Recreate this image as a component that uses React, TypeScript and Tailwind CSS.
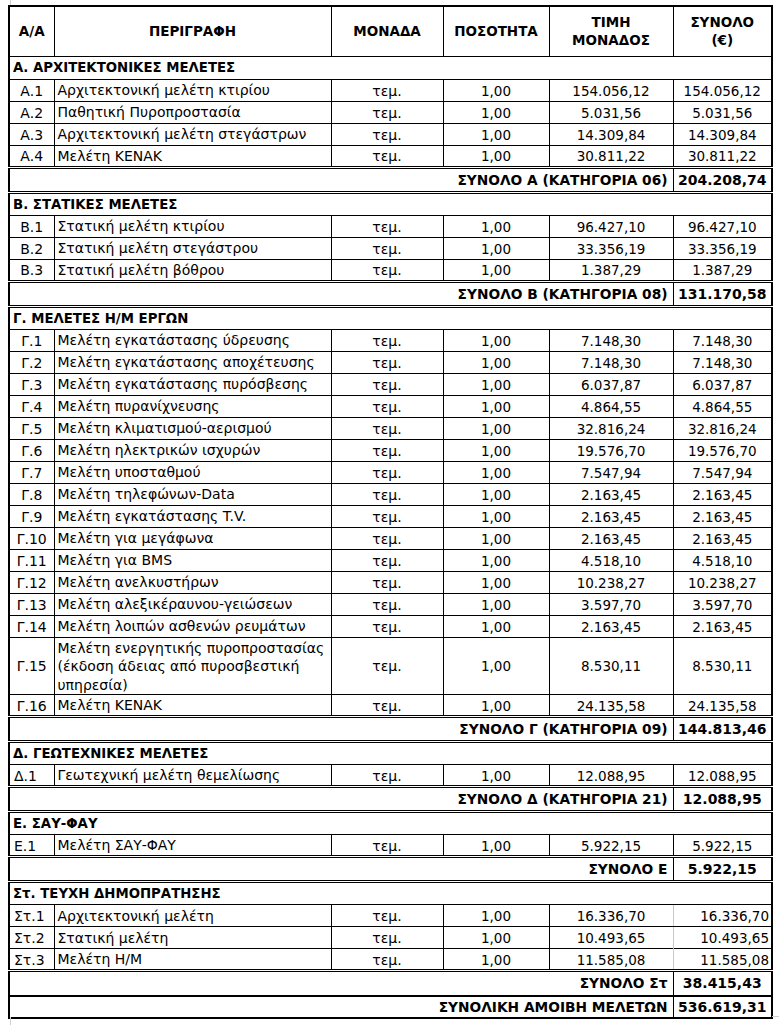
import React from "react";

type Item = [string, string[], string];
type Section = {
  title: string;
  items: Item[];
  total: [string, string];
  leftCode?: boolean;
  rightVals?: boolean;
  last?: boolean;
};

const sections: Section[] = [
  {
    title: "Α. ΑΡΧΙΤΕΚΤΟΝΙΚΕΣ ΜΕΛΕΤΕΣ",
    items: [
      ["Α.1", ["Αρχιτεκτονική μελέτη κτιρίου"], "154.056,12"],
      ["Α.2", ["Παθητική Πυροπροστασία"], "5.031,56"],
      ["Α.3", ["Αρχιτεκτονική μελέτη στεγάστρων"], "14.309,84"],
      ["Α.4", ["Μελέτη ΚΕΝΑΚ"], "30.811,22"],
    ],
    total: ["ΣΥΝΟΛΟ Α (ΚΑΤΗΓΟΡΙΑ 06)", "204.208,74"],
  },
  {
    title: "Β. ΣΤΑΤΙΚΕΣ ΜΕΛΕΤΕΣ",
    items: [
      ["Β.1", ["Στατική μελέτη κτιρίου"], "96.427,10"],
      ["Β.2", ["Στατική μελέτη στεγάστρου"], "33.356,19"],
      ["Β.3", ["Στατική μελέτη βόθρου"], "1.387,29"],
    ],
    total: ["ΣΥΝΟΛΟ Β (ΚΑΤΗΓΟΡΙΑ 08)", "131.170,58"],
  },
  {
    title: "Γ. ΜΕΛΕΤΕΣ Η/Μ ΕΡΓΩΝ",
    items: [
      ["Γ.1", ["Μελέτη εγκατάστασης ύδρευσης"], "7.148,30"],
      ["Γ.2", ["Μελέτη εγκατάστασης αποχέτευσης"], "7.148,30"],
      ["Γ.3", ["Μελέτη εγκατάστασης πυρόσβεσης"], "6.037,87"],
      ["Γ.4", ["Μελέτη πυρανίχνευσης"], "4.864,55"],
      ["Γ.5", ["Μελέτη κλιματισμού-αερισμού"], "32.816,24"],
      ["Γ.6", ["Μελέτη ηλεκτρικών ισχυρών"], "19.576,70"],
      ["Γ.7", ["Μελέτη υποσταθμού"], "7.547,94"],
      ["Γ.8", ["Μελέτη τηλεφώνων-Data"], "2.163,45"],
      ["Γ.9", ["Μελέτη εγκατάστασης T.V."], "2.163,45"],
      ["Γ.10", ["Μελέτη για μεγάφωνα"], "2.163,45"],
      ["Γ.11", ["Μελέτη για BMS"], "4.518,10"],
      ["Γ.12", ["Μελέτη ανελκυστήρων"], "10.238,27"],
      ["Γ.13", ["Μελέτη αλεξικέραυνου-γειώσεων"], "3.597,70"],
      ["Γ.14", ["Μελέτη λοιπών ασθενών ρευμάτων"], "2.163,45"],
      [
        "Γ.15",
        [
          "Μελέτη ενεργητικής πυροπροστασίας",
          "(έκδοση άδειας από πυροσβεστική",
          "υπηρεσία)",
        ],
        "8.530,11",
      ],
      ["Γ.16", ["Μελέτη ΚΕΝΑΚ"], "24.135,58"],
    ],
    total: ["ΣΥΝΟΛΟ Γ (ΚΑΤΗΓΟΡΙΑ 09)", "144.813,46"],
  },
  {
    title: "Δ. ΓΕΩΤΕΧΝΙΚΕΣ ΜΕΛΕΤΕΣ",
    items: [["Δ.1", ["Γεωτεχνική μελέτη θεμελίωσης"], "12.088,95"]],
    total: ["ΣΥΝΟΛΟ Δ (ΚΑΤΗΓΟΡΙΑ 21)", "12.088,95"],
    leftCode: true,
  },
  {
    title: "Ε. ΣΑΥ-ΦΑΥ",
    items: [["Ε.1", ["Μελέτη ΣΑΥ-ΦΑΥ"], "5.922,15"]],
    total: ["ΣΥΝΟΛΟ Ε", "5.922,15"],
    leftCode: true,
  },
  {
    title: "Στ. ΤΕΥΧΗ ΔΗΜΟΠΡΑΤΗΣΗΣ",
    items: [
      ["Στ.1", ["Αρχιτεκτονική μελέτη"], "16.336,70"],
      ["Στ.2", ["Στατική μελέτη"], "10.493,65"],
      ["Στ.3", ["Μελέτη Η/Μ"], "11.585,08"],
    ],
    total: ["ΣΥΝΟΛΟ Στ", "38.415,43"],
    leftCode: true,
    rightVals: true,
    last: true,
  },
];

export default function App() {
  return (
    <div className="relative min-h-[1025px] bg-white pl-[8px] pt-[5px] font-['DejaVu_Sans',sans-serif] text-[13.5px] leading-[18px] text-black">
      <div className="absolute left-[10px] top-0 h-[5px] w-px bg-[#d0d0d0]" />
      <div className="absolute left-[10px] top-[1017px] h-[8px] w-px bg-[#d0d0d0]" />
      <div className="absolute left-[772px] top-[1016px] h-px w-[7px] bg-[#d0d0d0]" />
      <table className="w-[763px] table-fixed border-collapse border-2 border-black">
        <colgroup>
          <col className="w-[45px]" />
          <col className="w-[277px]" />
          <col className="w-[112px]" />
          <col className="w-[106px]" />
          <col className="w-[124px]" />
          <col className="w-[99px]" />
        </colgroup>
        <thead>
          <tr className="h-[50px] font-bold">
            <td className="border border-black text-center">Α/Α</td>
            <td className="border border-black text-center">ΠΕΡΙΓΡΑΦΗ</td>
            <td className="border border-black text-center">ΜΟΝΑΔΑ</td>
            <td className="border border-black text-center">ΠΟΣΟΤΗΤΑ</td>
            <td className="border border-black text-center leading-[18px]">
              ΤΙΜΗ
              <br />
              ΜΟΝΑΔΟΣ
            </td>
            <td className="border border-black text-center leading-[18px]">
              ΣΥΝΟΛΟ
              <br />
              (€)
            </td>
          </tr>
        </thead>
        <tbody>
          {sections.map((s) => (
            <React.Fragment key={s.title}>
              <tr className="h-[23px]">
                <td
                  colSpan={6}
                  className="border border-black px-[3px] pt-px text-[13.3px] font-bold leading-[18px]"
                >
                  {s.title}
                </td>
              </tr>
              {s.items.map((it, i) => {
                const lastItem = i === s.items.length - 1;
                const rowB = lastItem
                  ? "border border-black border-b-[3px] border-b-black border-double pt-px leading-[18px]"
                  : "border border-black pt-px leading-[18px]";
                const multi = it[1].length > 1;
                return (
                  <tr key={it[0]} className={multi ? "h-[57px]" : "h-[22px]"}>
                    <td
                      className={`${rowB} text-[14px] ${
                        s.leftCode ? "pl-[4px] text-left" : "text-center"
                      }`}
                    >
                      {it[0]}
                    </td>
                    <td className={`${rowB} px-[3px] text-[14px]`}>
                      {it[1].map((l, k) => (
                        <span key={k} className="block leading-[18.5px]">
                          {l}
                        </span>
                      ))}
                    </td>
                    <td className={`${rowB} text-center text-[14px]`}>τεμ.</td>
                    <td className={`${rowB} text-center`}>1,00</td>
                    <td
                      className={`${rowB} text-center ${
                        s.rightVals ? "border-r-[#c8c8c8]" : ""
                      }`}
                    >
                      {it[2]}
                    </td>
                    <td
                      className={`${rowB} ${
                        s.rightVals
                          ? "border-l-[#c8c8c8] pr-[2px] text-right"
                          : "text-center"
                      }`}
                    >
                      {it[2]}
                    </td>
                  </tr>
                );
              })}
              <tr className="h-[25px] font-bold">
                <td
                  colSpan={5}
                  className={`border border-black border-t-[3px] border-double pr-[5px] text-right text-[13.75px] leading-[18px] ${
                    s.last
                      ? "border-b-2 border-b-black"
                      : "border-b-[3px] border-b-black"
                  }`}
                  style={s.last ? { borderBottomStyle: "solid" } : undefined}
                >
                  {s.total[0]}
                </td>
                <td
                  className={`border border-black border-t-[3px] border-double text-center text-[14px] leading-[18px] ${
                    s.last
                      ? "border-b-2 border-b-black"
                      : "border-b-[3px] border-b-black"
                  }`}
                  style={s.last ? { borderBottomStyle: "solid" } : undefined}
                >
                  {s.total[1]}
                </td>
              </tr>
            </React.Fragment>
          ))}
          <tr className="h-[22px] font-bold">
            <td
              colSpan={5}
              className="border border-black pr-[5px] text-right text-[13.75px] leading-[18px]"
            >
              ΣΥΝΟΛΙΚΗ ΑΜΟΙΒΗ ΜΕΛΕΤΩΝ
            </td>
            <td className="border border-black text-center text-[14px] leading-[18px]">
              536.619,31
            </td>
          </tr>
        </tbody>
      </table>
    </div>
  );
}
